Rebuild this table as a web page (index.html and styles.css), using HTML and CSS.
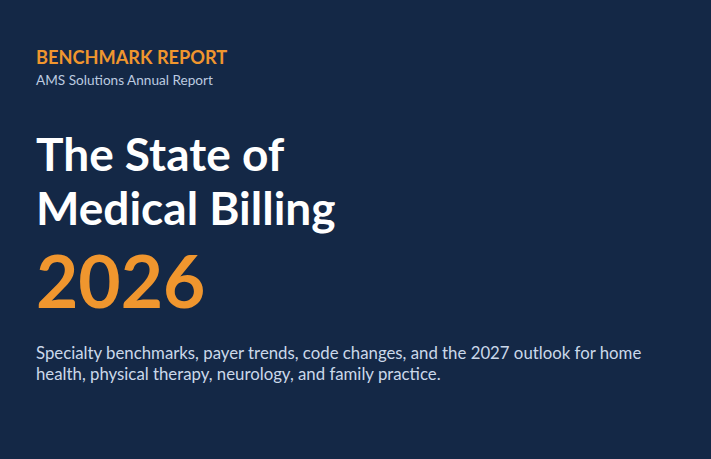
FILE: index.html
```html
<!DOCTYPE html>
<html lang="en">
<head>
<meta charset="utf-8">
<title>The State of Medical Billing 2026</title>
<link rel="stylesheet" href="styles.css">
</head>
<body>
<section class="cover">
  <p class="eyebrow">BENCHMARK REPORT</p>
  <p class="source">AMS Solutions Annual Report</p>
  <h1 class="title">The State of<br>Medical Billing</h1>
  <p class="year">2026</p>
  <p class="lede">Specialty benchmarks, payer trends, code changes, and the 2027 outlook for home health, physical therapy, neurology, and family practice.</p>
</section>
</body>
</html>
```
FILE: styles.css
```css
html, body {
  margin: 0;
  padding: 0;
  background: #142846;
}
body {
  font-family: Lato, "Noto Sans", sans-serif;
  width: 711px;
  height: 459px;
  overflow: hidden;
}
.cover {
  box-sizing: border-box;
  height: 459px;
  padding: 46px 36px 0 36px;
  display: flex;
  flex-direction: column;
  align-items: flex-start;
}
.eyebrow {
  margin: 0;
  font-size: 18.2px;
  line-height: 22px;
  font-weight: 700;
  color: #f0962e;
}
.source {
  margin: 3px 0 0;
  font-size: 13.6px;
  line-height: 18px;
  color: #bccbe0;
}
.title {
  margin: 38px 0 0;
  font-size: 46px;
  line-height: 54px;
  font-weight: 700;
  color: #ffffff;
}
.year {
  margin: 5px 0 0;
  font-size: 73px;
  line-height: 80px;
  font-weight: 700;
  color: #f0962e;
}
.lede {
  margin: 22px 0 0;
  max-width: 640px;
  font-size: 16.8px;
  line-height: 21px;
  color: #cbd8ea;
}
```
